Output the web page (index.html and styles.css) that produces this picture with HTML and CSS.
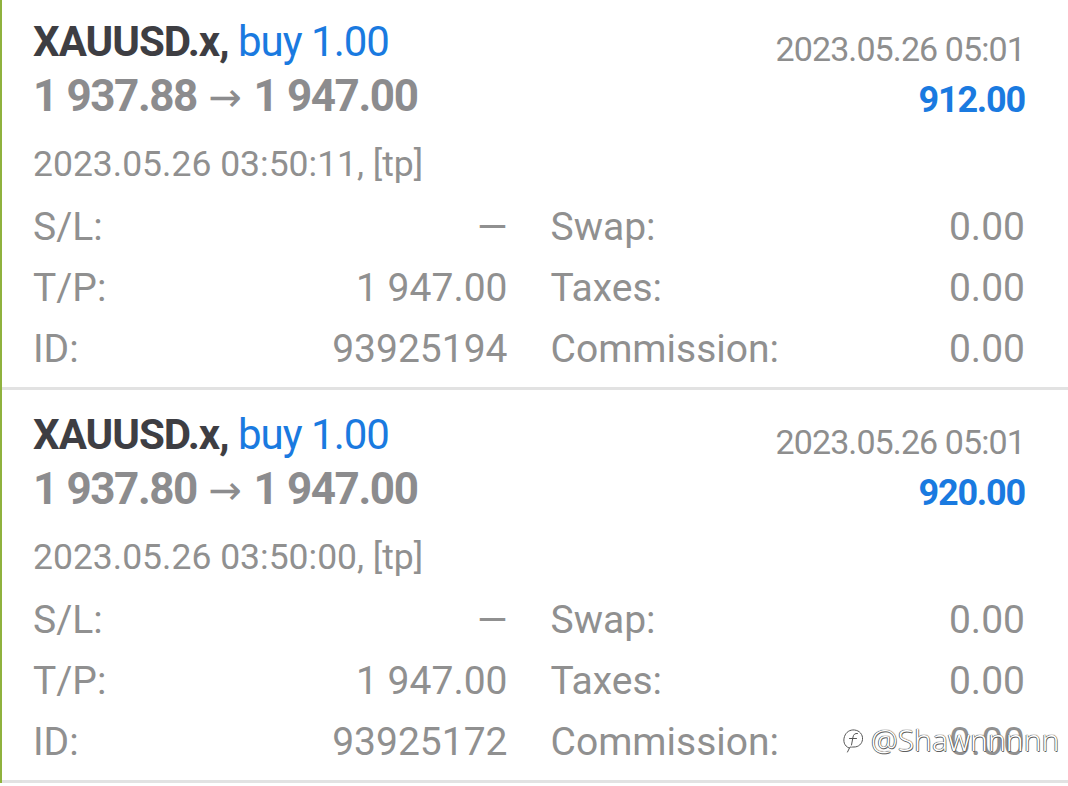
FILE: index.html
```html
<!DOCTYPE html>
<html lang="en">
<head>
<meta charset="utf-8">
<title>History</title>
<link rel="stylesheet" href="styles.css">
</head>
<body>
<div class="history">
  <section class="deal">
    <div class="head">
      <div class="head-left">
        <div class="symbol"><span class="sym">XAUUSD.x,</span> <span class="type">buy 1.00</span></div>
        <div class="prices">1 937.88 <span class="arrow">→</span> 1 947.00</div>
      </div>
      <div class="head-right">
        <div class="time">2023.05.26 05:01</div>
        <div class="profit">912.00</div>
      </div>
    </div>
    <div class="open">2023.05.26 03:50:11, [tp]</div>
    <div class="details">
      <div class="cell"><span>S/L:</span><span class="val">—</span></div>
      <div class="cell"><span>Swap:</span><span class="val">0.00</span></div>
      <div class="cell"><span>T/P:</span><span class="val">1 947.00</span></div>
      <div class="cell"><span>Taxes:</span><span class="val">0.00</span></div>
      <div class="cell"><span>ID:</span><span class="val">93925194</span></div>
      <div class="cell"><span>Commission:</span><span class="val">0.00</span></div>
    </div>
  </section>
  <section class="deal">
    <div class="head">
      <div class="head-left">
        <div class="symbol"><span class="sym">XAUUSD.x,</span> <span class="type">buy 1.00</span></div>
        <div class="prices">1 937.80 <span class="arrow">→</span> 1 947.00</div>
      </div>
      <div class="head-right">
        <div class="time">2023.05.26 05:01</div>
        <div class="profit">920.00</div>
      </div>
    </div>
    <div class="open">2023.05.26 03:50:00, [tp]</div>
    <div class="details">
      <div class="cell"><span>S/L:</span><span class="val">—</span></div>
      <div class="cell"><span>Swap:</span><span class="val">0.00</span></div>
      <div class="cell"><span>T/P:</span><span class="val">1 947.00</span></div>
      <div class="cell"><span>Taxes:</span><span class="val">0.00</span></div>
      <div class="cell"><span>ID:</span><span class="val">93925172</span></div>
      <div class="cell"><span>Commission:</span><span class="val">0.00</span></div>
    </div>
  </section>
</div>
<div class="watermark">
  <svg class="wm-logo" width="24" height="30" viewBox="0 0 24 30">
    <path d="M7 23 C2 21 1 16 2.5 11.5 C4 7 8 4.5 12.5 5 C17.5 5.5 21 9.5 20.5 14.5 C20 19 16.5 22 12 22 L8 22 L5.5 27" fill="none" stroke="#fff" stroke-width="3" stroke-linecap="round"/>
    <path d="M7 23 C2 21 1 16 2.5 11.5 C4 7 8 4.5 12.5 5 C17.5 5.5 21 9.5 20.5 14.5 C20 19 16.5 22 12 22 L8 22 L5.5 27" fill="none" stroke="#555" stroke-width="1" stroke-linecap="round"/>
    <path d="M15.5 8.5 C13 8 11.5 9.5 11 12 L9.5 20 M7.5 13.5 L14.5 13.5" fill="none" stroke="#fff" stroke-width="3" stroke-linecap="round"/>
    <path d="M15.5 8.5 C13 8 11.5 9.5 11 12 L9.5 20 M7.5 13.5 L14.5 13.5" fill="none" stroke="#555" stroke-width="1" stroke-linecap="round"/>
  </svg>
  <span class="wm-text">@Shawnnnnn</span>
</div>
</body>
</html>
```

FILE: styles.css
```css
html, body {
  margin: 0;
  padding: 0;
  background: #ffffff;
}

body {
  font-family: Roboto, "Noto Sans", sans-serif;
  color: #8e8e8e;
  width: 1068px;
  height: 786px;
  overflow: hidden;
  position: relative;
}

.history {
  margin-top: -3px;
  border-left: 2px solid #8fb23e;
}

.deal {
  padding: 25px 43px 7px 31px;
  border-bottom: 3px solid #e2e2e2;
}

.head {
  display: flex;
  justify-content: space-between;
  align-items: flex-start;
}

.symbol {
  font-size: 42px;
  line-height: 40px;
  white-space: nowrap;
  letter-spacing: -1px;
}

.sym {
  font-weight: 700;
  color: #3e3e43;
}

.type {
  font-weight: 400;
  color: #1a7ae0;
}

.prices {
  margin-top: 13px;
  font-size: 44px;
  line-height: 42px;
  font-weight: 700;
  color: #8c8c8e;
  letter-spacing: -1.4px;
  white-space: nowrap;
}

.arrow {
  font-family: "DejaVu Sans", sans-serif;
  font-weight: 400;
  font-size: 40px;
  letter-spacing: 0;
  margin: 0 2px;
}

.head-right {
  display: flex;
  flex-direction: column;
  align-items: flex-end;
  margin-top: 11px;
}

.time {
  font-size: 34px;
  line-height: 32px;
  letter-spacing: -0.9px;
  color: #8e8e8e;
}

.profit {
  margin-top: 18px;
  font-size: 36px;
  line-height: 34px;
  font-weight: 700;
  letter-spacing: -1.2px;
  color: #1a7ae0;
}

.open {
  margin-top: 29px;
  font-size: 35.5px;
  line-height: 35px;
  color: #909090;
}

.details {
  margin-top: 15px;
  display: grid;
  grid-template-columns: 1fr 1fr;
  column-gap: 43px;
  font-size: 39px;
  line-height: 61px;
  color: #909090;
}

.cell {
  display: flex;
  justify-content: space-between;
  white-space: nowrap;
}

.watermark {
  position: absolute;
  left: 842px;
  top: 723px;
  display: flex;
  align-items: center;
  gap: 5px;
}

.wm-text {
  font-family: "Noto Sans", sans-serif;
  font-weight: 300;
  font-size: 30px;
  line-height: 34px;
  color: #ffffff;
  text-shadow: 0 0 1px #444, 0 0 1px #444, 0.5px 0.5px 0 #666, -0.5px -0.5px 0 #666;
}
```
